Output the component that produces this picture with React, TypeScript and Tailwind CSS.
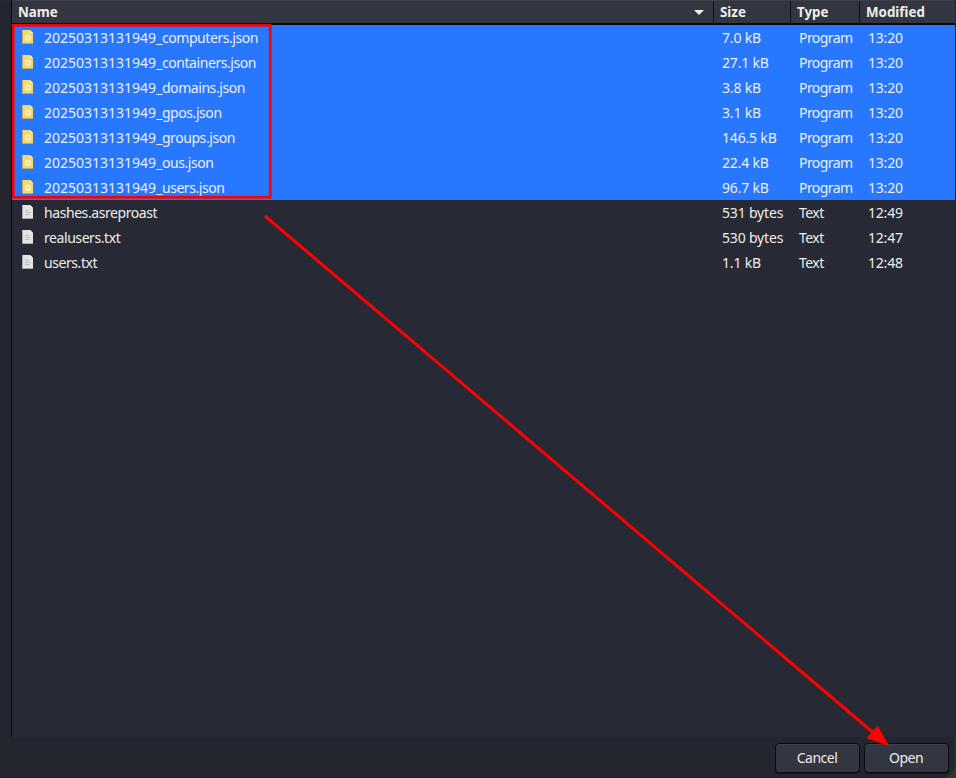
type FileRow = { name: string; size: string; type: string; time: string };

const selected: FileRow[] = [
  { name: "20250313131949_computers.json", size: "7.0 kB", type: "Program", time: "13:20" },
  { name: "20250313131949_containers.json", size: "27.1 kB", type: "Program", time: "13:20" },
  { name: "20250313131949_domains.json", size: "3.8 kB", type: "Program", time: "13:20" },
  { name: "20250313131949_gpos.json", size: "3.1 kB", type: "Program", time: "13:20" },
  { name: "20250313131949_groups.json", size: "146.5 kB", type: "Program", time: "13:20" },
  { name: "20250313131949_ous.json", size: "22.4 kB", type: "Program", time: "13:20" },
  { name: "20250313131949_users.json", size: "96.7 kB", type: "Program", time: "13:20" },
];

const others: FileRow[] = [
  { name: "hashes.asreproast", size: "531 bytes", type: "Text", time: "12:49" },
  { name: "realusers.txt", size: "530 bytes", type: "Text", time: "12:47" },
  { name: "users.txt", size: "1.1 kB", type: "Text", time: "12:48" },
];

function JsonIcon() {
  return (
    <svg width="12" height="14" viewBox="0 0 12 14" className="mb-[2px] shrink-0">
      <path d="M1 0H8L11 3V13H1Q0 13 0 12V1Q0 0 1 0Z" fill="#f6d968" />
      <path d="M0.5 0.5V13.5H11" fill="none" stroke="#b5ac78" strokeWidth="1" />
      <path d="M8 0L11 3H8Z" fill="#fff3b8" />
      <circle cx="6" cy="7.7" r="2.2" fill="none" stroke="#fff6cf" strokeWidth="1.5" />
    </svg>
  );
}

function TextIcon() {
  return (
    <svg width="12" height="14" viewBox="0 0 12 14" className="mb-[2px] shrink-0">
      <path d="M1 0H8L11 3V13H1Q0 13 0 12V1Q0 0 1 0Z" fill="#e4e4e4" />
      <path d="M0.5 0.5V13.5H11" fill="none" stroke="#aaaaac" strokeWidth="1" />
      <path d="M8 0L11 3H8Z" fill="#ffffff" />
      <path d="M3 5.5H7M3 7.5H9M3 9.5H8" stroke="#c2c2c2" strokeWidth="1" />
    </svg>
  );
}

/* Leading digits keep their natural advance; the letters after them are set tighter. */
function FileName({ text }: { text: string }) {
  const digits = text.match(/^\d+/)?.[0] ?? "";
  return (
    <span className="pl-[10px]">
      {digits}
      <span className="tracking-[-0.43px]">{text.slice(digits.length)}</span>
    </span>
  );
}

function Row({ file, active }: { file: FileRow; active?: boolean }) {
  return (
    <div className={`flex h-[25px] items-center leading-[25px] ${active ? "bg-[#2777ff]" : ""}`}>
      <div className="flex w-[710px] items-center pl-[10px]">
        {active ? <JsonIcon /> : <TextIcon />}
        <FileName text={file.name} />
      </div>
      <span className="w-[77px] tracking-[-0.18px]">{file.size}</span>
      <span className="w-[69px] tracking-[-0.55px]">{file.type}</span>
      <span className="tracking-[-0.2px]">{file.time}</span>
    </div>
  );
}

function Header() {
  return (
    <div className="flex h-[25px] shrink-0 border-t border-b-2 border-t-[#3d4049] border-b-[#08090d] bg-[#333641] text-[13.333px] font-bold leading-[22px] text-[#eeeeec]">
      <div className="flex w-[702px] items-center justify-between border-r border-[#101116] pr-[9px] pl-[6px]">
        <span>Name</span>
        <svg width="10" height="5" viewBox="0 0 10 5">
          <path d="M0 0H10L5 5Z" fill="#eeeeec" />
        </svg>
      </div>
      <div className="w-[77px] border-r border-[#101116] pl-[6px]">Size</div>
      <div className="w-[69px] border-r border-[#101116] pl-[6px]">Type</div>
      <div className="pl-[6px]">Modified</div>
    </div>
  );
}

const buttonClass =
  "h-[30px] w-[85px] rounded-[4px] border border-[#0c0d12] bg-[#333641] pr-[1px] text-center leading-[28px] tracking-[-0.5px] shadow-[inset_0_1px_0_#3c3f4a,0_1px_1px_#15171c]";

export default function App() {
  return (
    <div className="relative flex h-[778px] w-[956px] flex-col overflow-hidden bg-[#2d3438] font-['Noto_Sans',sans-serif] text-[14px] whitespace-nowrap text-[#eeeeec]">
      <div className="flex h-[737px] shrink-0 bg-[#23262e]">
        <div className="w-[11px] border-t border-[#292c34]" />
        <div className="flex w-[944px] flex-col border-l border-[#090a0e] bg-[#272a34]">
          <Header />
          <div>
            {selected.map((file) => (
              <Row key={file.name} file={file} active />
            ))}
          </div>
          {others.map((file) => (
            <Row key={file.name} file={file} />
          ))}
        </div>
        <div className="w-px bg-[#23262e]" />
      </div>
      <div className="flex h-[41px] w-[955px] items-start justify-end gap-[4px] rounded-br-[16px] border-b border-[#1c1e28] bg-[#23262e] pt-[6px] pr-[6px]">
        <button className={buttonClass}>Cancel</button>
        <button className={buttonClass}>Open</button>
      </div>
      <svg width="956" height="778" className="pointer-events-none absolute inset-0">
        <rect x="13.25" y="25.25" width="257" height="172" fill="none" stroke="#ff0000" strokeWidth="2.7" />
        <path d="M265 216L876 735" stroke="#ff0000" strokeWidth="3" />
        <path d="M889.5 746.5L866.5 738L877.5 725.5Z" fill="#ff0000" />
      </svg>
    </div>
  );
}
